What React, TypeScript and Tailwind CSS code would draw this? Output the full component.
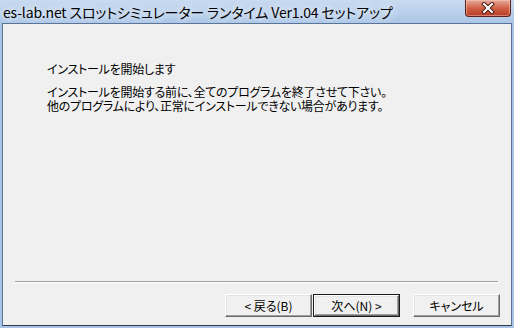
import React from "react";

const jp = "font-['Noto_Sans_CJK_JP','Noto_Sans',sans-serif] [font-feature-settings:'palt']";

function DlgButton({ label, isDefault }: { label: string; isDefault?: boolean }) {
  return (
    <div className={`h-[23px] w-[87px] ${isDefault ? "border border-[#1b1b1b]" : ""}`}>
      <div className="flex h-full w-full items-center justify-center border-t border-l border-t-white border-l-white border-b border-r border-b-[#696969] border-r-[#696969] bg-[#f0f0f0] shadow-[inset_-1px_-1px_0_#a0a0a0,inset_1px_1px_0_#e3e3e3]">
        <span className={`${jp} text-[12px] leading-[13px] text-black`}>{label}</span>
      </div>
    </div>
  );
}

function CloseButton() {
  return (
    <div className="absolute right-[3px] top-0 flex h-[17px] w-[46px] items-center justify-center rounded-b-[4px] border border-t-0 border-[#5e2119] bg-gradient-to-b from-[#e7aa9c] via-[#d2614a] to-[#b93a22] shadow-[inset_0_0_0_1px_rgba(255,210,200,0.45)]">
      <svg width="14" height="12" viewBox="0 0 14 12">
        <path d="M3 2 L11 10 M11 2 L3 10" stroke="#4a1a14" strokeWidth="4" strokeLinecap="square" />
        <path d="M3 2 L11 10 M11 2 L3 10" stroke="#ffffff" strokeWidth="2" strokeLinecap="square" />
      </svg>
    </div>
  );
}

export default function App() {
  return (
    <div className="relative flex h-[328px] w-[514px] flex-col bg-[#a8c3e5] px-[2px] pb-[2px]">
      {/* Title bar */}
      <div className="flex h-[23px] items-center bg-gradient-to-b from-[#c8daf0] to-[#abc6e7] -mx-[2px] px-[3px]">
        <span className={`${jp} text-[14px] leading-[18px] tracking-[-0.15px] text-black [text-shadow:0_0_6px_#ffffff,0_0_10px_#e8f1fb]`}>
          es-lab.net スロットシミュレーター ランタイム Ver1.04 セットアップ
        </span>
      </div>
      <CloseButton />

      {/* Client area */}
      <div className="flex flex-1 flex-col border border-[#5c7498] border-b-[#2c3a50] bg-[#f0f0f0]">
        <div className={`${jp} pl-[44px] pt-[38px] text-[12px] leading-[14px] tracking-[-0.25px] text-black`}>
          <div>インストールを開始します</div>
          <div className="mt-[9px]">インストールを開始する前に、全てのプログラムを終了させて下さい。</div>
          <div>他のプログラムにより、正常にインストールできない場合があります。</div>
        </div>

        <div className="flex-1" />

        <div className="ml-[12px] mr-[13px] border-t border-b border-t-[#a0a0a0] border-b-white" />

        <div className="mt-[11px] mb-[8px] flex justify-end pr-[11px]">
          <DlgButton label="< 戻る(B)" />
          <div className="w-[1px]" />
          <DlgButton label="次へ(N) >" isDefault />
          <div className="w-[13px]" />
          <DlgButton label="キャンセル" />
        </div>
      </div>
    </div>
  );
}
